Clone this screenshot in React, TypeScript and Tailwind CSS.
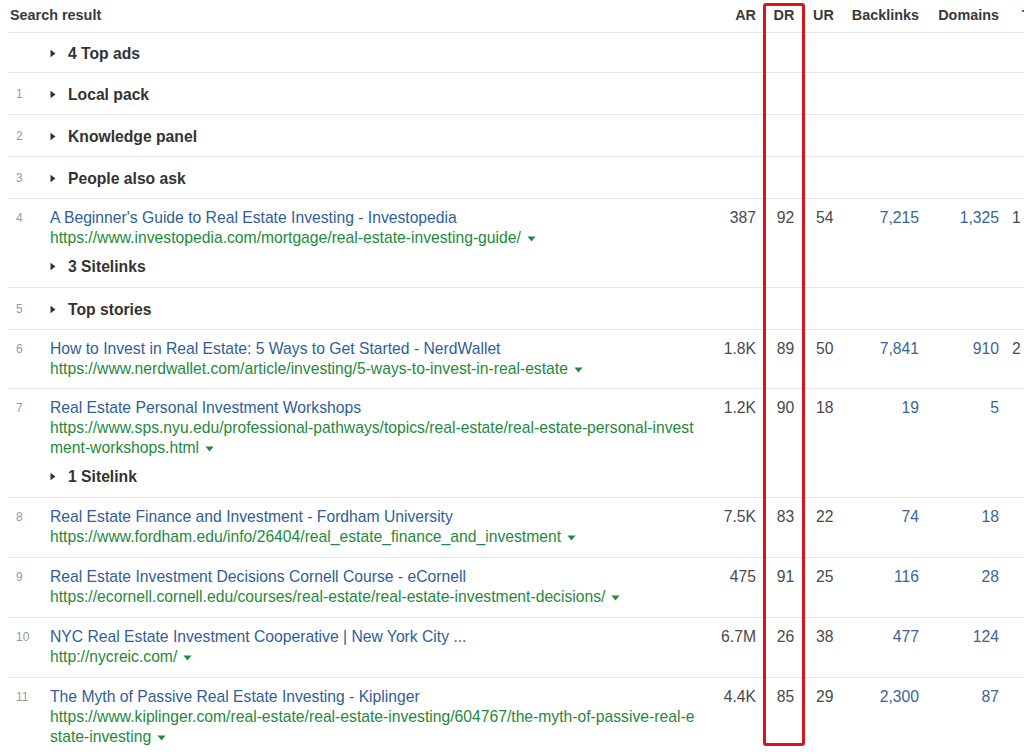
import React from "react";

type Result = {
  n: number;
  title: string;
  url: string;
  ar: string;
  dr: string;
  ur: string;
  backlinks: string;
  domains: string;
  next?: string;
  sitelinks?: string;
};

type Row = { kind: "feature"; n?: number; label: string; short?: boolean } | ({ kind: "result" } & Result);

const rows: Row[] = [
  { kind: "feature", label: "4 Top ads", short: true },
  { kind: "feature", n: 1, label: "Local pack" },
  { kind: "feature", n: 2, label: "Knowledge panel" },
  { kind: "feature", n: 3, label: "People also ask" },
  {
    kind: "result",
    n: 4,
    title: "A Beginner's Guide to Real Estate Investing - Investopedia",
    url: "https://www.investopedia.com/mortgage/real-estate-investing-guide/",
    ar: "387",
    dr: "92",
    ur: "54",
    backlinks: "7,215",
    domains: "1,325",
    next: "1",
    sitelinks: "3 Sitelinks",
  },
  { kind: "feature", n: 5, label: "Top stories" },
  {
    kind: "result",
    n: 6,
    title: "How to Invest in Real Estate: 5 Ways to Get Started - NerdWallet",
    url: "https://www.nerdwallet.com/article/investing/5-ways-to-invest-in-real-estate",
    ar: "1.8K",
    dr: "89",
    ur: "50",
    backlinks: "7,841",
    domains: "910",
    next: "2",
  },
  {
    kind: "result",
    n: 7,
    title: "Real Estate Personal Investment Workshops",
    url: "https://www.sps.nyu.edu/professional-pathways/topics/real-estate/real-estate-personal-investment-workshops.html",
    ar: "1.2K",
    dr: "90",
    ur: "18",
    backlinks: "19",
    domains: "5",
    sitelinks: "1 Sitelink",
  },
  {
    kind: "result",
    n: 8,
    title: "Real Estate Finance and Investment - Fordham University",
    url: "https://www.fordham.edu/info/26404/real_estate_finance_and_investment",
    ar: "7.5K",
    dr: "83",
    ur: "22",
    backlinks: "74",
    domains: "18",
  },
  {
    kind: "result",
    n: 9,
    title: "Real Estate Investment Decisions Cornell Course - eCornell",
    url: "https://ecornell.cornell.edu/courses/real-estate/real-estate-investment-decisions/",
    ar: "475",
    dr: "91",
    ur: "25",
    backlinks: "116",
    domains: "28",
  },
  {
    kind: "result",
    n: 10,
    title: "NYC Real Estate Investment Cooperative | New York City ...",
    url: "http://nycreic.com/",
    ar: "6.7M",
    dr: "26",
    ur: "38",
    backlinks: "477",
    domains: "124",
  },
  {
    kind: "result",
    n: 11,
    title: "The Myth of Passive Real Estate Investing - Kiplinger",
    url: "https://www.kiplinger.com/real-estate/real-estate-investing/604767/the-myth-of-passive-real-estate-investing",
    ar: "4.4K",
    dr: "85",
    ur: "29",
    backlinks: "2,300",
    domains: "87",
  },
];

function Caret() {
  return (
    <svg width="6" height="9" viewBox="0 0 6 9" className="mr-[12px] shrink-0">
      <path d="M0.5 0.8 L5.5 4.5 L0.5 8.2 Z" fill="#333" />
    </svg>
  );
}

function DownCaret() {
  return (
    <svg width="9" height="6" viewBox="0 0 9 6" className="ml-[6px] inline-block align-middle">
      <path d="M0.5 0.5 H8.5 L4.5 5.5 Z" fill="#1e8a3c" />
    </svg>
  );
}

function Expander({ label }: { label: string }) {
  return (
    <div className="flex items-center text-[15.7px] font-bold leading-[21px] text-[#333]">
      <Caret />
      <span>{label}</span>
    </div>
  );
}

export default function App() {
  return (
    <div className="relative h-[755px] w-[1024px] overflow-hidden bg-white font-['Liberation_Sans',Arial,sans-serif]">
      <div className="ml-[8px] w-[1100px]">
        {/* Header */}
        <div className="flex h-[33px] items-center border-b border-[#e6e6e6] text-[14.4px] font-bold text-[#3a3a3a]">
          <div className="w-[702px] pl-[2px]">Search result</div>
          <div className="w-[53px] pr-[7px] text-right">AR</div>
          <div className="w-[42px] text-center">DR</div>
          <div className="w-[40px] pl-[8px]">UR</div>
          <div className="w-[80px] pr-[6px] text-right">Backlinks</div>
          <div className="w-[80px] pr-[6px] text-right">Domains</div>
          <div className="pl-[17px]">Traffic</div>
        </div>

        {rows.map((row, i) =>
          row.kind === "feature" ? (
            <div
              key={i}
              className={`flex border-b border-[#e6e6e6] ${row.short ? "pt-[10px] pb-[8px]" : "pt-[11px] pb-[9px]"}`}
            >
              <div className="w-[42px] pl-[8px] text-[12px] leading-[21px] text-[#9a9a9a]">{row.n ?? ""}</div>
              <Expander label={row.label} />
            </div>
          ) : (
            <div
              key={i}
              className={`flex border-b border-[#e6e6e6] text-[15.7px] leading-[20px] ${
                row.n === 6 ? "pt-[9px] pb-[9px]" : "pt-[9px] pb-[10px]"
              }`}
            >
              <div className="w-[42px] pl-[8px] text-[12px] text-[#9a9a9a]">{row.n}</div>
              <div className="w-[660px] pr-[10px]">
                <div className="text-[#2f5e98]">{row.title}</div>
                <div className="break-all text-[#1e8a3c]">
                  {row.url}
                  <DownCaret />
                </div>
                {row.sitelinks && (
                  <div className="mt-[8px]">
                    <Expander label={row.sitelinks} />
                  </div>
                )}
              </div>
              <div className="w-[53px] pr-[7px] text-right text-[#4a4a4a]">{row.ar}</div>
              <div className="w-[42px] pl-[3px] text-center text-[#4a4a4a]">{row.dr}</div>
              <div className="w-[40px] pl-[11px] text-[#4a4a4a]">{row.ur}</div>
              <div className="w-[80px] pr-[6px] text-right text-[#3a6599]">{row.backlinks}</div>
              <div className="w-[80px] pr-[6px] text-right text-[#3a6599]">{row.domains}</div>
              <div className="pl-[7px] text-[#4a4a4a]">{row.next ?? ""}</div>
            </div>
          )
        )}
      </div>

      {/* DR highlight box */}
      <div className="pointer-events-none absolute left-[763px] top-[3px] h-[743px] w-[42px] rounded-[3px] border-[3px] border-[#d7151d]" />
    </div>
  );
}
